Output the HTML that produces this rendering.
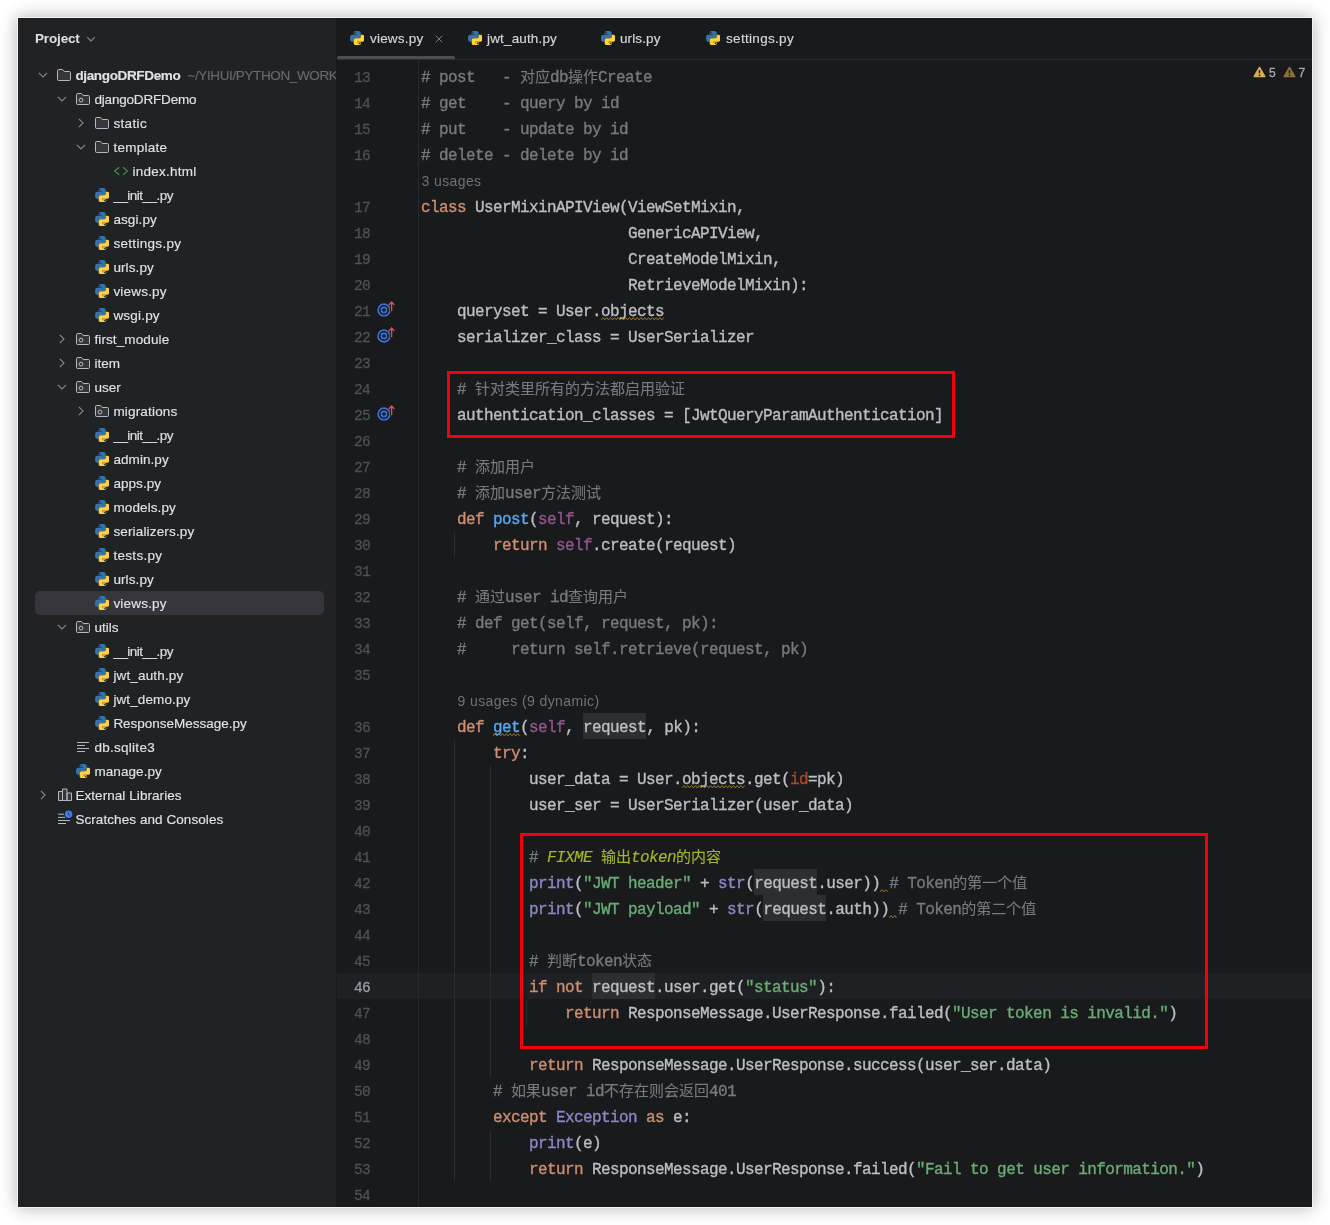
<!DOCTYPE html>
<html lang="zh"><head><meta charset="utf-8"><title>views.py</title>
<style>
*{box-sizing:border-box}
html,body{margin:0;padding:0}
body{width:1330px;height:1225px;overflow:hidden;background:#fff;position:relative;font-family:"Liberation Sans","Noto Sans CJK SC",sans-serif;}
.shadow{position:absolute;left:18px;top:18px;width:1294px;height:1189px;box-shadow:0 0 16px 1px rgba(0,0,0,.30);}
.win{position:absolute;left:17px;top:17px;width:1296px;height:1191px;background:#191a1c;border:1px solid rgba(255,255,255,.95);overflow:hidden}
.abs{position:absolute}
/* everything inside .page is positioned in page coordinates */
.page{position:absolute;left:-18px;top:-18px;width:1330px;height:1225px;will-change:transform}
.sidebar{position:absolute;left:18px;top:18px;width:318px;height:1189px;background:#212224;overflow:hidden}
.sb-edge{position:absolute;left:22px;top:18px;width:1px;height:1189px;background:#1b1c1e}
.ptitle{position:absolute;left:35px;top:30px;font-size:13.5px;font-weight:bold;color:#dfe1e5;line-height:18px;white-space:nowrap}
.row{position:absolute;left:18px;width:318px;overflow:hidden;height:24px;line-height:24px;font-size:13.5px;-webkit-text-stroke:0.15px;color:#dfe1e5;white-space:nowrap}
.row .lbl{position:absolute;top:0;white-space:nowrap}
.row svg{position:absolute}
.sel{position:absolute;left:35px;top:591px;width:289px;height:24px;border-radius:5px;background:#35353b}
.grey{color:#676a71}
.tabs{position:absolute;left:337px;top:18px;width:975px;height:41px;background:#191a1c}
.tabline{position:absolute;left:337px;top:59px;width:975px;height:1px;background:#2b2d30}
.tabsel{position:absolute;left:337px;top:56px;width:118px;height:3px;background:#4c4e54;border-radius:1.5px}
.tab{position:absolute;top:30px;font-size:13.5px;-webkit-text-stroke:0.15px;line-height:18px;color:#d5d7dc;white-space:nowrap}
.gutline{position:absolute;left:418px;top:60px;width:1px;height:1147px;background:#28292d}
.curline{position:absolute;left:337px;top:973px;width:975px;height:26px;background:#1f2024}
.ln{position:absolute;left:337px;width:33px;text-align:right;font-family:"Liberation Mono",monospace;font-size:14.5px;letter-spacing:-0.7px;height:26px;line-height:26px;color:#4d515a;-webkit-text-stroke:0.3px}
.ln.cur{color:#9b9ea7}
.cl{position:absolute;left:421px;height:26px;line-height:26px;font-family:"Liberation Mono","Noto Sans CJK SC",monospace;font-size:16px;letter-spacing:-0.6px;color:#bcbec4;white-space:pre;-webkit-text-stroke:0.35px}
.z{font-size:15px;letter-spacing:0;font-style:normal;-webkit-text-stroke:0.1px}
.hint{position:absolute;height:26px;line-height:26px;font-size:14px;color:#6e727a;white-space:nowrap}
.c{color:#767a81}.k{color:#cf8e6d}.f{color:#56a8f5}.s{color:#94558d}.b{color:#8888c6}.g{color:#6aab73}.a{color:#aa4926}
.t{color:#a2b72a;font-style:italic;-webkit-text-stroke:0.15px}.tz{color:#a2b72a}
.hl{background:#2c2e2f;padding:6px 0 2px}
.guide{position:absolute;width:1px;background:#2a2c2f}
.red{position:absolute;border:3px solid #f4000c}
.warn{position:absolute;font-size:12px;color:#a8abb2;line-height:14px;-webkit-text-stroke:0.3px}
</style></head>
<body>
<div class="shadow"></div>
<div class="win"><div class="page">
<div class="sidebar"></div><div class="sb-edge"></div>
<div class="sel"></div>
<div class="ptitle" style="letter-spacing:-0.154px">Project</div>
<svg class="abs" style="left:85px;top:33px" width="12" height="12" viewBox="0 0 12 12"><path d="M2.2 4.2 L6 7.9 L9.8 4.2" fill="none" stroke="#868a91" stroke-width="1.1"/></svg>
<svg class="abs" style="left:37px;top:69.4px" width="12" height="12" viewBox="0 0 12 12"><path d="M1.9 3.9 L6 8 L10.1 3.9" fill="none" stroke="#868a91" stroke-width="1.1"/></svg>
<svg class="abs" style="left:56px;top:67px" width="16" height="16" viewBox="0 0 16 16"><path d="M1.5 3.6 Q1.5 2.5 2.6 2.5 H6.2 Q6.8 2.5 7.2 3 L8.3 4.5 H13.4 Q14.5 4.5 14.5 5.6 V12.4 Q14.5 13.5 13.4 13.5 H2.6 Q1.5 13.5 1.5 12.4 Z" fill="#36363c" stroke="#b4b8bf" stroke-width="1"/></svg>
<div class="row" style="top:64px"><span class="lbl" style="left:57.4px;letter-spacing:-0.346px"><b>djangoDRFDemo</b></span><span class="lbl" style="left:162.4px"><span class="grey" style="margin-left:7px;letter-spacing:-0.377px">~/YIHUI/PYTHON_WORK</span></span></div>
<svg class="abs" style="left:56px;top:93.4px" width="12" height="12" viewBox="0 0 12 12"><path d="M1.9 3.9 L6 8 L10.1 3.9" fill="none" stroke="#868a91" stroke-width="1.1"/></svg>
<svg class="abs" style="left:75px;top:91px" width="16" height="16" viewBox="0 0 16 16"><path d="M1.5 3.6 Q1.5 2.5 2.6 2.5 H6.2 Q6.8 2.5 7.2 3 L8.3 4.5 H13.4 Q14.5 4.5 14.5 5.6 V12.4 Q14.5 13.5 13.4 13.5 H2.6 Q1.5 13.5 1.5 12.4 Z" fill="#36363c" stroke="#b4b8bf" stroke-width="1"/><circle cx="6" cy="9.1" r="1.9" fill="none" stroke="#b4b8bf" stroke-width="1"/></svg>
<div class="row" style="top:88px"><span class="lbl" style="left:76.4px;letter-spacing:-0.177px">djangoDRFDemo</span></div>
<svg class="abs" style="left:74.8px;top:117px" width="12" height="12" viewBox="0 0 12 12"><path d="M3.9 1.9 L8 6 L3.9 10.1" fill="none" stroke="#868a91" stroke-width="1.1"/></svg>
<svg class="abs" style="left:94px;top:115px" width="16" height="16" viewBox="0 0 16 16"><path d="M1.5 3.6 Q1.5 2.5 2.6 2.5 H6.2 Q6.8 2.5 7.2 3 L8.3 4.5 H13.4 Q14.5 4.5 14.5 5.6 V12.4 Q14.5 13.5 13.4 13.5 H2.6 Q1.5 13.5 1.5 12.4 Z" fill="#36363c" stroke="#b4b8bf" stroke-width="1"/></svg>
<div class="row" style="top:112px"><span class="lbl" style="left:95.4px;letter-spacing:0.347px">static</span></div>
<svg class="abs" style="left:75px;top:141.4px" width="12" height="12" viewBox="0 0 12 12"><path d="M1.9 3.9 L6 8 L10.1 3.9" fill="none" stroke="#868a91" stroke-width="1.1"/></svg>
<svg class="abs" style="left:94px;top:139px" width="16" height="16" viewBox="0 0 16 16"><path d="M1.5 3.6 Q1.5 2.5 2.6 2.5 H6.2 Q6.8 2.5 7.2 3 L8.3 4.5 H13.4 Q14.5 4.5 14.5 5.6 V12.4 Q14.5 13.5 13.4 13.5 H2.6 Q1.5 13.5 1.5 12.4 Z" fill="#36363c" stroke="#b4b8bf" stroke-width="1"/></svg>
<div class="row" style="top:136px"><span class="lbl" style="left:95.4px;letter-spacing:0.265px">template</span></div>
<svg class="abs" style="left:113.3px;top:165.2px" width="16" height="12" viewBox="0 0 16 12"><path d="M6.2 2.3 L1.7 6 L6.2 9.7 M10 2.3 L14.5 6 L10 9.7" fill="none" stroke="#468a4c" stroke-width="1.2"/></svg>
<div class="row" style="top:160px"><span class="lbl" style="left:114.4px;letter-spacing:0.247px">index.html</span></div>
<svg class="abs" style="left:95.1px;top:188.0px" width="14.4" height="14.4" viewBox="0 0 24 24"><path d="M11.9.1C9 .1 6.15.6 6.15 3V5.4H12.1V6.25H3.2C1.2 6.25.05 8.6.05 12C.05 15.6 1.1 17.9 3.2 17.9H6.1V14.8C6.1 13.1 7.2 11.9 8.8 11.9H14.7C16.5 11.9 17.85 10.6 17.85 8.5V3.2C17.85 1.1 15.5.1 11.9.1ZM8.36 1.85A1.06 1.06 0 1 0 8.37 1.85Z" fill="#3673a8" fill-rule="evenodd"/><path d="M11.9.1C9 .1 6.15.6 6.15 3V5.4H12.1V6.25H3.2C1.2 6.25.05 8.6.05 12C.05 15.6 1.1 17.9 3.2 17.9H6.1V14.8C6.1 13.1 7.2 11.9 8.8 11.9H14.7C16.5 11.9 17.85 10.6 17.85 8.5V3.2C17.85 1.1 15.5.1 11.9.1ZM8.36 1.85A1.06 1.06 0 1 0 8.37 1.85Z" fill="#ffd23a" fill-rule="evenodd" transform="rotate(180 12 12)"/></svg>
<div class="row" style="top:184px"><span class="lbl" style="left:95.4px;letter-spacing:-0.519px">__init__.py</span></div>
<svg class="abs" style="left:95.1px;top:212.0px" width="14.4" height="14.4" viewBox="0 0 24 24"><path d="M11.9.1C9 .1 6.15.6 6.15 3V5.4H12.1V6.25H3.2C1.2 6.25.05 8.6.05 12C.05 15.6 1.1 17.9 3.2 17.9H6.1V14.8C6.1 13.1 7.2 11.9 8.8 11.9H14.7C16.5 11.9 17.85 10.6 17.85 8.5V3.2C17.85 1.1 15.5.1 11.9.1ZM8.36 1.85A1.06 1.06 0 1 0 8.37 1.85Z" fill="#3673a8" fill-rule="evenodd"/><path d="M11.9.1C9 .1 6.15.6 6.15 3V5.4H12.1V6.25H3.2C1.2 6.25.05 8.6.05 12C.05 15.6 1.1 17.9 3.2 17.9H6.1V14.8C6.1 13.1 7.2 11.9 8.8 11.9H14.7C16.5 11.9 17.85 10.6 17.85 8.5V3.2C17.85 1.1 15.5.1 11.9.1ZM8.36 1.85A1.06 1.06 0 1 0 8.37 1.85Z" fill="#ffd23a" fill-rule="evenodd" transform="rotate(180 12 12)"/></svg>
<div class="row" style="top:208px"><span class="lbl" style="left:95.4px;letter-spacing:0.103px">asgi.py</span></div>
<svg class="abs" style="left:95.1px;top:236.0px" width="14.4" height="14.4" viewBox="0 0 24 24"><path d="M11.9.1C9 .1 6.15.6 6.15 3V5.4H12.1V6.25H3.2C1.2 6.25.05 8.6.05 12C.05 15.6 1.1 17.9 3.2 17.9H6.1V14.8C6.1 13.1 7.2 11.9 8.8 11.9H14.7C16.5 11.9 17.85 10.6 17.85 8.5V3.2C17.85 1.1 15.5.1 11.9.1ZM8.36 1.85A1.06 1.06 0 1 0 8.37 1.85Z" fill="#3673a8" fill-rule="evenodd"/><path d="M11.9.1C9 .1 6.15.6 6.15 3V5.4H12.1V6.25H3.2C1.2 6.25.05 8.6.05 12C.05 15.6 1.1 17.9 3.2 17.9H6.1V14.8C6.1 13.1 7.2 11.9 8.8 11.9H14.7C16.5 11.9 17.85 10.6 17.85 8.5V3.2C17.85 1.1 15.5.1 11.9.1ZM8.36 1.85A1.06 1.06 0 1 0 8.37 1.85Z" fill="#ffd23a" fill-rule="evenodd" transform="rotate(180 12 12)"/></svg>
<div class="row" style="top:232px"><span class="lbl" style="left:95.4px;letter-spacing:0.314px">settings.py</span></div>
<svg class="abs" style="left:95.1px;top:260.0px" width="14.4" height="14.4" viewBox="0 0 24 24"><path d="M11.9.1C9 .1 6.15.6 6.15 3V5.4H12.1V6.25H3.2C1.2 6.25.05 8.6.05 12C.05 15.6 1.1 17.9 3.2 17.9H6.1V14.8C6.1 13.1 7.2 11.9 8.8 11.9H14.7C16.5 11.9 17.85 10.6 17.85 8.5V3.2C17.85 1.1 15.5.1 11.9.1ZM8.36 1.85A1.06 1.06 0 1 0 8.37 1.85Z" fill="#3673a8" fill-rule="evenodd"/><path d="M11.9.1C9 .1 6.15.6 6.15 3V5.4H12.1V6.25H3.2C1.2 6.25.05 8.6.05 12C.05 15.6 1.1 17.9 3.2 17.9H6.1V14.8C6.1 13.1 7.2 11.9 8.8 11.9H14.7C16.5 11.9 17.85 10.6 17.85 8.5V3.2C17.85 1.1 15.5.1 11.9.1ZM8.36 1.85A1.06 1.06 0 1 0 8.37 1.85Z" fill="#ffd23a" fill-rule="evenodd" transform="rotate(180 12 12)"/></svg>
<div class="row" style="top:256px"><span class="lbl" style="left:95.4px;letter-spacing:0.105px">urls.py</span></div>
<svg class="abs" style="left:95.1px;top:284.0px" width="14.4" height="14.4" viewBox="0 0 24 24"><path d="M11.9.1C9 .1 6.15.6 6.15 3V5.4H12.1V6.25H3.2C1.2 6.25.05 8.6.05 12C.05 15.6 1.1 17.9 3.2 17.9H6.1V14.8C6.1 13.1 7.2 11.9 8.8 11.9H14.7C16.5 11.9 17.85 10.6 17.85 8.5V3.2C17.85 1.1 15.5.1 11.9.1ZM8.36 1.85A1.06 1.06 0 1 0 8.37 1.85Z" fill="#3673a8" fill-rule="evenodd"/><path d="M11.9.1C9 .1 6.15.6 6.15 3V5.4H12.1V6.25H3.2C1.2 6.25.05 8.6.05 12C.05 15.6 1.1 17.9 3.2 17.9H6.1V14.8C6.1 13.1 7.2 11.9 8.8 11.9H14.7C16.5 11.9 17.85 10.6 17.85 8.5V3.2C17.85 1.1 15.5.1 11.9.1ZM8.36 1.85A1.06 1.06 0 1 0 8.37 1.85Z" fill="#ffd23a" fill-rule="evenodd" transform="rotate(180 12 12)"/></svg>
<div class="row" style="top:280px"><span class="lbl" style="left:95.4px;letter-spacing:0.204px">views.py</span></div>
<svg class="abs" style="left:95.1px;top:308.0px" width="14.4" height="14.4" viewBox="0 0 24 24"><path d="M11.9.1C9 .1 6.15.6 6.15 3V5.4H12.1V6.25H3.2C1.2 6.25.05 8.6.05 12C.05 15.6 1.1 17.9 3.2 17.9H6.1V14.8C6.1 13.1 7.2 11.9 8.8 11.9H14.7C16.5 11.9 17.85 10.6 17.85 8.5V3.2C17.85 1.1 15.5.1 11.9.1ZM8.36 1.85A1.06 1.06 0 1 0 8.37 1.85Z" fill="#3673a8" fill-rule="evenodd"/><path d="M11.9.1C9 .1 6.15.6 6.15 3V5.4H12.1V6.25H3.2C1.2 6.25.05 8.6.05 12C.05 15.6 1.1 17.9 3.2 17.9H6.1V14.8C6.1 13.1 7.2 11.9 8.8 11.9H14.7C16.5 11.9 17.85 10.6 17.85 8.5V3.2C17.85 1.1 15.5.1 11.9.1ZM8.36 1.85A1.06 1.06 0 1 0 8.37 1.85Z" fill="#ffd23a" fill-rule="evenodd" transform="rotate(180 12 12)"/></svg>
<div class="row" style="top:304px"><span class="lbl" style="left:95.4px;letter-spacing:0.198px">wsgi.py</span></div>
<svg class="abs" style="left:55.8px;top:333px" width="12" height="12" viewBox="0 0 12 12"><path d="M3.9 1.9 L8 6 L3.9 10.1" fill="none" stroke="#868a91" stroke-width="1.1"/></svg>
<svg class="abs" style="left:75px;top:331px" width="16" height="16" viewBox="0 0 16 16"><path d="M1.5 3.6 Q1.5 2.5 2.6 2.5 H6.2 Q6.8 2.5 7.2 3 L8.3 4.5 H13.4 Q14.5 4.5 14.5 5.6 V12.4 Q14.5 13.5 13.4 13.5 H2.6 Q1.5 13.5 1.5 12.4 Z" fill="#36363c" stroke="#b4b8bf" stroke-width="1"/><circle cx="6" cy="9.1" r="1.9" fill="none" stroke="#b4b8bf" stroke-width="1"/></svg>
<div class="row" style="top:328px"><span class="lbl" style="left:76.4px;letter-spacing:0.121px">first_module</span></div>
<svg class="abs" style="left:55.8px;top:357px" width="12" height="12" viewBox="0 0 12 12"><path d="M3.9 1.9 L8 6 L3.9 10.1" fill="none" stroke="#868a91" stroke-width="1.1"/></svg>
<svg class="abs" style="left:75px;top:355px" width="16" height="16" viewBox="0 0 16 16"><path d="M1.5 3.6 Q1.5 2.5 2.6 2.5 H6.2 Q6.8 2.5 7.2 3 L8.3 4.5 H13.4 Q14.5 4.5 14.5 5.6 V12.4 Q14.5 13.5 13.4 13.5 H2.6 Q1.5 13.5 1.5 12.4 Z" fill="#36363c" stroke="#b4b8bf" stroke-width="1"/><circle cx="6" cy="9.1" r="1.9" fill="none" stroke="#b4b8bf" stroke-width="1"/></svg>
<div class="row" style="top:352px"><span class="lbl" style="left:76.4px;letter-spacing:0.071px">item</span></div>
<svg class="abs" style="left:56px;top:381.4px" width="12" height="12" viewBox="0 0 12 12"><path d="M1.9 3.9 L6 8 L10.1 3.9" fill="none" stroke="#868a91" stroke-width="1.1"/></svg>
<svg class="abs" style="left:75px;top:379px" width="16" height="16" viewBox="0 0 16 16"><path d="M1.5 3.6 Q1.5 2.5 2.6 2.5 H6.2 Q6.8 2.5 7.2 3 L8.3 4.5 H13.4 Q14.5 4.5 14.5 5.6 V12.4 Q14.5 13.5 13.4 13.5 H2.6 Q1.5 13.5 1.5 12.4 Z" fill="#36363c" stroke="#b4b8bf" stroke-width="1"/><circle cx="6" cy="9.1" r="1.9" fill="none" stroke="#b4b8bf" stroke-width="1"/></svg>
<div class="row" style="top:376px"><span class="lbl" style="left:76.4px;letter-spacing:0.009px">user</span></div>
<svg class="abs" style="left:74.8px;top:405px" width="12" height="12" viewBox="0 0 12 12"><path d="M3.9 1.9 L8 6 L3.9 10.1" fill="none" stroke="#868a91" stroke-width="1.1"/></svg>
<svg class="abs" style="left:94px;top:403px" width="16" height="16" viewBox="0 0 16 16"><path d="M1.5 3.6 Q1.5 2.5 2.6 2.5 H6.2 Q6.8 2.5 7.2 3 L8.3 4.5 H13.4 Q14.5 4.5 14.5 5.6 V12.4 Q14.5 13.5 13.4 13.5 H2.6 Q1.5 13.5 1.5 12.4 Z" fill="#36363c" stroke="#b4b8bf" stroke-width="1"/><circle cx="6" cy="9.1" r="1.9" fill="none" stroke="#b4b8bf" stroke-width="1"/></svg>
<div class="row" style="top:400px"><span class="lbl" style="left:95.4px;letter-spacing:0.182px">migrations</span></div>
<svg class="abs" style="left:95.1px;top:428.0px" width="14.4" height="14.4" viewBox="0 0 24 24"><path d="M11.9.1C9 .1 6.15.6 6.15 3V5.4H12.1V6.25H3.2C1.2 6.25.05 8.6.05 12C.05 15.6 1.1 17.9 3.2 17.9H6.1V14.8C6.1 13.1 7.2 11.9 8.8 11.9H14.7C16.5 11.9 17.85 10.6 17.85 8.5V3.2C17.85 1.1 15.5.1 11.9.1ZM8.36 1.85A1.06 1.06 0 1 0 8.37 1.85Z" fill="#3673a8" fill-rule="evenodd"/><path d="M11.9.1C9 .1 6.15.6 6.15 3V5.4H12.1V6.25H3.2C1.2 6.25.05 8.6.05 12C.05 15.6 1.1 17.9 3.2 17.9H6.1V14.8C6.1 13.1 7.2 11.9 8.8 11.9H14.7C16.5 11.9 17.85 10.6 17.85 8.5V3.2C17.85 1.1 15.5.1 11.9.1ZM8.36 1.85A1.06 1.06 0 1 0 8.37 1.85Z" fill="#ffd23a" fill-rule="evenodd" transform="rotate(180 12 12)"/></svg>
<div class="row" style="top:424px"><span class="lbl" style="left:95.4px;letter-spacing:-0.519px">__init__.py</span></div>
<svg class="abs" style="left:95.1px;top:452.0px" width="14.4" height="14.4" viewBox="0 0 24 24"><path d="M11.9.1C9 .1 6.15.6 6.15 3V5.4H12.1V6.25H3.2C1.2 6.25.05 8.6.05 12C.05 15.6 1.1 17.9 3.2 17.9H6.1V14.8C6.1 13.1 7.2 11.9 8.8 11.9H14.7C16.5 11.9 17.85 10.6 17.85 8.5V3.2C17.85 1.1 15.5.1 11.9.1ZM8.36 1.85A1.06 1.06 0 1 0 8.37 1.85Z" fill="#3673a8" fill-rule="evenodd"/><path d="M11.9.1C9 .1 6.15.6 6.15 3V5.4H12.1V6.25H3.2C1.2 6.25.05 8.6.05 12C.05 15.6 1.1 17.9 3.2 17.9H6.1V14.8C6.1 13.1 7.2 11.9 8.8 11.9H14.7C16.5 11.9 17.85 10.6 17.85 8.5V3.2C17.85 1.1 15.5.1 11.9.1ZM8.36 1.85A1.06 1.06 0 1 0 8.37 1.85Z" fill="#ffd23a" fill-rule="evenodd" transform="rotate(180 12 12)"/></svg>
<div class="row" style="top:448px"><span class="lbl" style="left:95.4px;letter-spacing:0.077px">admin.py</span></div>
<svg class="abs" style="left:95.1px;top:476.0px" width="14.4" height="14.4" viewBox="0 0 24 24"><path d="M11.9.1C9 .1 6.15.6 6.15 3V5.4H12.1V6.25H3.2C1.2 6.25.05 8.6.05 12C.05 15.6 1.1 17.9 3.2 17.9H6.1V14.8C6.1 13.1 7.2 11.9 8.8 11.9H14.7C16.5 11.9 17.85 10.6 17.85 8.5V3.2C17.85 1.1 15.5.1 11.9.1ZM8.36 1.85A1.06 1.06 0 1 0 8.37 1.85Z" fill="#3673a8" fill-rule="evenodd"/><path d="M11.9.1C9 .1 6.15.6 6.15 3V5.4H12.1V6.25H3.2C1.2 6.25.05 8.6.05 12C.05 15.6 1.1 17.9 3.2 17.9H6.1V14.8C6.1 13.1 7.2 11.9 8.8 11.9H14.7C16.5 11.9 17.85 10.6 17.85 8.5V3.2C17.85 1.1 15.5.1 11.9.1ZM8.36 1.85A1.06 1.06 0 1 0 8.37 1.85Z" fill="#ffd23a" fill-rule="evenodd" transform="rotate(180 12 12)"/></svg>
<div class="row" style="top:472px"><span class="lbl" style="left:95.4px;letter-spacing:0.058px">apps.py</span></div>
<svg class="abs" style="left:95.1px;top:500.0px" width="14.4" height="14.4" viewBox="0 0 24 24"><path d="M11.9.1C9 .1 6.15.6 6.15 3V5.4H12.1V6.25H3.2C1.2 6.25.05 8.6.05 12C.05 15.6 1.1 17.9 3.2 17.9H6.1V14.8C6.1 13.1 7.2 11.9 8.8 11.9H14.7C16.5 11.9 17.85 10.6 17.85 8.5V3.2C17.85 1.1 15.5.1 11.9.1ZM8.36 1.85A1.06 1.06 0 1 0 8.37 1.85Z" fill="#3673a8" fill-rule="evenodd"/><path d="M11.9.1C9 .1 6.15.6 6.15 3V5.4H12.1V6.25H3.2C1.2 6.25.05 8.6.05 12C.05 15.6 1.1 17.9 3.2 17.9H6.1V14.8C6.1 13.1 7.2 11.9 8.8 11.9H14.7C16.5 11.9 17.85 10.6 17.85 8.5V3.2C17.85 1.1 15.5.1 11.9.1ZM8.36 1.85A1.06 1.06 0 1 0 8.37 1.85Z" fill="#ffd23a" fill-rule="evenodd" transform="rotate(180 12 12)"/></svg>
<div class="row" style="top:496px"><span class="lbl" style="left:95.4px;letter-spacing:0.119px">models.py</span></div>
<svg class="abs" style="left:95.1px;top:524.0px" width="14.4" height="14.4" viewBox="0 0 24 24"><path d="M11.9.1C9 .1 6.15.6 6.15 3V5.4H12.1V6.25H3.2C1.2 6.25.05 8.6.05 12C.05 15.6 1.1 17.9 3.2 17.9H6.1V14.8C6.1 13.1 7.2 11.9 8.8 11.9H14.7C16.5 11.9 17.85 10.6 17.85 8.5V3.2C17.85 1.1 15.5.1 11.9.1ZM8.36 1.85A1.06 1.06 0 1 0 8.37 1.85Z" fill="#3673a8" fill-rule="evenodd"/><path d="M11.9.1C9 .1 6.15.6 6.15 3V5.4H12.1V6.25H3.2C1.2 6.25.05 8.6.05 12C.05 15.6 1.1 17.9 3.2 17.9H6.1V14.8C6.1 13.1 7.2 11.9 8.8 11.9H14.7C16.5 11.9 17.85 10.6 17.85 8.5V3.2C17.85 1.1 15.5.1 11.9.1ZM8.36 1.85A1.06 1.06 0 1 0 8.37 1.85Z" fill="#ffd23a" fill-rule="evenodd" transform="rotate(180 12 12)"/></svg>
<div class="row" style="top:520px"><span class="lbl" style="left:95.4px;letter-spacing:0.158px">serializers.py</span></div>
<svg class="abs" style="left:95.1px;top:548.0px" width="14.4" height="14.4" viewBox="0 0 24 24"><path d="M11.9.1C9 .1 6.15.6 6.15 3V5.4H12.1V6.25H3.2C1.2 6.25.05 8.6.05 12C.05 15.6 1.1 17.9 3.2 17.9H6.1V14.8C6.1 13.1 7.2 11.9 8.8 11.9H14.7C16.5 11.9 17.85 10.6 17.85 8.5V3.2C17.85 1.1 15.5.1 11.9.1ZM8.36 1.85A1.06 1.06 0 1 0 8.37 1.85Z" fill="#3673a8" fill-rule="evenodd"/><path d="M11.9.1C9 .1 6.15.6 6.15 3V5.4H12.1V6.25H3.2C1.2 6.25.05 8.6.05 12C.05 15.6 1.1 17.9 3.2 17.9H6.1V14.8C6.1 13.1 7.2 11.9 8.8 11.9H14.7C16.5 11.9 17.85 10.6 17.85 8.5V3.2C17.85 1.1 15.5.1 11.9.1ZM8.36 1.85A1.06 1.06 0 1 0 8.37 1.85Z" fill="#ffd23a" fill-rule="evenodd" transform="rotate(180 12 12)"/></svg>
<div class="row" style="top:544px"><span class="lbl" style="left:95.4px;letter-spacing:0.309px">tests.py</span></div>
<svg class="abs" style="left:95.1px;top:572.0px" width="14.4" height="14.4" viewBox="0 0 24 24"><path d="M11.9.1C9 .1 6.15.6 6.15 3V5.4H12.1V6.25H3.2C1.2 6.25.05 8.6.05 12C.05 15.6 1.1 17.9 3.2 17.9H6.1V14.8C6.1 13.1 7.2 11.9 8.8 11.9H14.7C16.5 11.9 17.85 10.6 17.85 8.5V3.2C17.85 1.1 15.5.1 11.9.1ZM8.36 1.85A1.06 1.06 0 1 0 8.37 1.85Z" fill="#3673a8" fill-rule="evenodd"/><path d="M11.9.1C9 .1 6.15.6 6.15 3V5.4H12.1V6.25H3.2C1.2 6.25.05 8.6.05 12C.05 15.6 1.1 17.9 3.2 17.9H6.1V14.8C6.1 13.1 7.2 11.9 8.8 11.9H14.7C16.5 11.9 17.85 10.6 17.85 8.5V3.2C17.85 1.1 15.5.1 11.9.1ZM8.36 1.85A1.06 1.06 0 1 0 8.37 1.85Z" fill="#ffd23a" fill-rule="evenodd" transform="rotate(180 12 12)"/></svg>
<div class="row" style="top:568px"><span class="lbl" style="left:95.4px;letter-spacing:0.105px">urls.py</span></div>
<svg class="abs" style="left:95.1px;top:596.0px" width="14.4" height="14.4" viewBox="0 0 24 24"><path d="M11.9.1C9 .1 6.15.6 6.15 3V5.4H12.1V6.25H3.2C1.2 6.25.05 8.6.05 12C.05 15.6 1.1 17.9 3.2 17.9H6.1V14.8C6.1 13.1 7.2 11.9 8.8 11.9H14.7C16.5 11.9 17.85 10.6 17.85 8.5V3.2C17.85 1.1 15.5.1 11.9.1ZM8.36 1.85A1.06 1.06 0 1 0 8.37 1.85Z" fill="#3673a8" fill-rule="evenodd"/><path d="M11.9.1C9 .1 6.15.6 6.15 3V5.4H12.1V6.25H3.2C1.2 6.25.05 8.6.05 12C.05 15.6 1.1 17.9 3.2 17.9H6.1V14.8C6.1 13.1 7.2 11.9 8.8 11.9H14.7C16.5 11.9 17.85 10.6 17.85 8.5V3.2C17.85 1.1 15.5.1 11.9.1ZM8.36 1.85A1.06 1.06 0 1 0 8.37 1.85Z" fill="#ffd23a" fill-rule="evenodd" transform="rotate(180 12 12)"/></svg>
<div class="row" style="top:592px"><span class="lbl" style="left:95.4px;letter-spacing:0.204px">views.py</span></div>
<svg class="abs" style="left:56px;top:621.4px" width="12" height="12" viewBox="0 0 12 12"><path d="M1.9 3.9 L6 8 L10.1 3.9" fill="none" stroke="#868a91" stroke-width="1.1"/></svg>
<svg class="abs" style="left:75px;top:619px" width="16" height="16" viewBox="0 0 16 16"><path d="M1.5 3.6 Q1.5 2.5 2.6 2.5 H6.2 Q6.8 2.5 7.2 3 L8.3 4.5 H13.4 Q14.5 4.5 14.5 5.6 V12.4 Q14.5 13.5 13.4 13.5 H2.6 Q1.5 13.5 1.5 12.4 Z" fill="#36363c" stroke="#b4b8bf" stroke-width="1"/><circle cx="6" cy="9.1" r="1.9" fill="none" stroke="#b4b8bf" stroke-width="1"/></svg>
<div class="row" style="top:616px"><span class="lbl" style="left:76.4px;letter-spacing:0.017px">utils</span></div>
<svg class="abs" style="left:95.1px;top:644.0px" width="14.4" height="14.4" viewBox="0 0 24 24"><path d="M11.9.1C9 .1 6.15.6 6.15 3V5.4H12.1V6.25H3.2C1.2 6.25.05 8.6.05 12C.05 15.6 1.1 17.9 3.2 17.9H6.1V14.8C6.1 13.1 7.2 11.9 8.8 11.9H14.7C16.5 11.9 17.85 10.6 17.85 8.5V3.2C17.85 1.1 15.5.1 11.9.1ZM8.36 1.85A1.06 1.06 0 1 0 8.37 1.85Z" fill="#3673a8" fill-rule="evenodd"/><path d="M11.9.1C9 .1 6.15.6 6.15 3V5.4H12.1V6.25H3.2C1.2 6.25.05 8.6.05 12C.05 15.6 1.1 17.9 3.2 17.9H6.1V14.8C6.1 13.1 7.2 11.9 8.8 11.9H14.7C16.5 11.9 17.85 10.6 17.85 8.5V3.2C17.85 1.1 15.5.1 11.9.1ZM8.36 1.85A1.06 1.06 0 1 0 8.37 1.85Z" fill="#ffd23a" fill-rule="evenodd" transform="rotate(180 12 12)"/></svg>
<div class="row" style="top:640px"><span class="lbl" style="left:95.4px;letter-spacing:-0.519px">__init__.py</span></div>
<svg class="abs" style="left:95.1px;top:668.0px" width="14.4" height="14.4" viewBox="0 0 24 24"><path d="M11.9.1C9 .1 6.15.6 6.15 3V5.4H12.1V6.25H3.2C1.2 6.25.05 8.6.05 12C.05 15.6 1.1 17.9 3.2 17.9H6.1V14.8C6.1 13.1 7.2 11.9 8.8 11.9H14.7C16.5 11.9 17.85 10.6 17.85 8.5V3.2C17.85 1.1 15.5.1 11.9.1ZM8.36 1.85A1.06 1.06 0 1 0 8.37 1.85Z" fill="#3673a8" fill-rule="evenodd"/><path d="M11.9.1C9 .1 6.15.6 6.15 3V5.4H12.1V6.25H3.2C1.2 6.25.05 8.6.05 12C.05 15.6 1.1 17.9 3.2 17.9H6.1V14.8C6.1 13.1 7.2 11.9 8.8 11.9H14.7C16.5 11.9 17.85 10.6 17.85 8.5V3.2C17.85 1.1 15.5.1 11.9.1ZM8.36 1.85A1.06 1.06 0 1 0 8.37 1.85Z" fill="#ffd23a" fill-rule="evenodd" transform="rotate(180 12 12)"/></svg>
<div class="row" style="top:664px"><span class="lbl" style="left:95.4px;letter-spacing:0.155px">jwt_auth.py</span></div>
<svg class="abs" style="left:95.1px;top:692.0px" width="14.4" height="14.4" viewBox="0 0 24 24"><path d="M11.9.1C9 .1 6.15.6 6.15 3V5.4H12.1V6.25H3.2C1.2 6.25.05 8.6.05 12C.05 15.6 1.1 17.9 3.2 17.9H6.1V14.8C6.1 13.1 7.2 11.9 8.8 11.9H14.7C16.5 11.9 17.85 10.6 17.85 8.5V3.2C17.85 1.1 15.5.1 11.9.1ZM8.36 1.85A1.06 1.06 0 1 0 8.37 1.85Z" fill="#3673a8" fill-rule="evenodd"/><path d="M11.9.1C9 .1 6.15.6 6.15 3V5.4H12.1V6.25H3.2C1.2 6.25.05 8.6.05 12C.05 15.6 1.1 17.9 3.2 17.9H6.1V14.8C6.1 13.1 7.2 11.9 8.8 11.9H14.7C16.5 11.9 17.85 10.6 17.85 8.5V3.2C17.85 1.1 15.5.1 11.9.1ZM8.36 1.85A1.06 1.06 0 1 0 8.37 1.85Z" fill="#ffd23a" fill-rule="evenodd" transform="rotate(180 12 12)"/></svg>
<div class="row" style="top:688px"><span class="lbl" style="left:95.4px;letter-spacing:0.109px">jwt_demo.py</span></div>
<svg class="abs" style="left:95.1px;top:716.0px" width="14.4" height="14.4" viewBox="0 0 24 24"><path d="M11.9.1C9 .1 6.15.6 6.15 3V5.4H12.1V6.25H3.2C1.2 6.25.05 8.6.05 12C.05 15.6 1.1 17.9 3.2 17.9H6.1V14.8C6.1 13.1 7.2 11.9 8.8 11.9H14.7C16.5 11.9 17.85 10.6 17.85 8.5V3.2C17.85 1.1 15.5.1 11.9.1ZM8.36 1.85A1.06 1.06 0 1 0 8.37 1.85Z" fill="#3673a8" fill-rule="evenodd"/><path d="M11.9.1C9 .1 6.15.6 6.15 3V5.4H12.1V6.25H3.2C1.2 6.25.05 8.6.05 12C.05 15.6 1.1 17.9 3.2 17.9H6.1V14.8C6.1 13.1 7.2 11.9 8.8 11.9H14.7C16.5 11.9 17.85 10.6 17.85 8.5V3.2C17.85 1.1 15.5.1 11.9.1ZM8.36 1.85A1.06 1.06 0 1 0 8.37 1.85Z" fill="#ffd23a" fill-rule="evenodd" transform="rotate(180 12 12)"/></svg>
<div class="row" style="top:712px"><span class="lbl" style="left:95.4px;letter-spacing:-0.015px">ResponseMessage.py</span></div>
<svg class="abs" style="left:76px;top:739px" width="16" height="16" viewBox="0 0 16 16"><path d="M1 3.5 H13 M1 6.5 H9 M1 9.5 H13 M1 12.5 H9" fill="none" stroke="#b4b8bf" stroke-width="1"/></svg>
<div class="row" style="top:736px"><span class="lbl" style="left:76.4px;letter-spacing:0.28px">db.sqlite3</span></div>
<svg class="abs" style="left:76.1px;top:764.0px" width="14.4" height="14.4" viewBox="0 0 24 24"><path d="M11.9.1C9 .1 6.15.6 6.15 3V5.4H12.1V6.25H3.2C1.2 6.25.05 8.6.05 12C.05 15.6 1.1 17.9 3.2 17.9H6.1V14.8C6.1 13.1 7.2 11.9 8.8 11.9H14.7C16.5 11.9 17.85 10.6 17.85 8.5V3.2C17.85 1.1 15.5.1 11.9.1ZM8.36 1.85A1.06 1.06 0 1 0 8.37 1.85Z" fill="#3673a8" fill-rule="evenodd"/><path d="M11.9.1C9 .1 6.15.6 6.15 3V5.4H12.1V6.25H3.2C1.2 6.25.05 8.6.05 12C.05 15.6 1.1 17.9 3.2 17.9H6.1V14.8C6.1 13.1 7.2 11.9 8.8 11.9H14.7C16.5 11.9 17.85 10.6 17.85 8.5V3.2C17.85 1.1 15.5.1 11.9.1ZM8.36 1.85A1.06 1.06 0 1 0 8.37 1.85Z" fill="#ffd23a" fill-rule="evenodd" transform="rotate(180 12 12)"/></svg>
<div class="row" style="top:760px"><span class="lbl" style="left:76.4px;letter-spacing:0.078px">manage.py</span></div>
<svg class="abs" style="left:36.8px;top:789px" width="12" height="12" viewBox="0 0 12 12"><path d="M3.9 1.9 L8 6 L3.9 10.1" fill="none" stroke="#868a91" stroke-width="1.1"/></svg>
<svg class="abs" style="left:57px;top:787px" width="16" height="16" viewBox="0 0 16 16"><path d="M1.5 4.5 H5.5 V13.5 H1.5 Z M5.5 2 H10 V13.5 H5.5 Z M10 6 H14.5 V13.5 H10 Z" fill="#36363c" stroke="#b4b8bf" stroke-width="1" stroke-linejoin="round"/></svg>
<div class="row" style="top:784px"><span class="lbl" style="left:57.4px;letter-spacing:0.064px">External Libraries</span></div>
<svg class="abs" style="left:57px;top:809px" width="18" height="20" viewBox="0 0 18 20"><path d="M1 5.2 H7 M1 8.4 H8 M1 11.5 H13 M1 14.5 H9" fill="none" stroke="#b4b8bf" stroke-width="1"/><circle cx="11.6" cy="5.3" r="3.7" fill="#3b78f2"/><path d="M11.6 3.4 V5.5 L12.8 6.6" fill="none" stroke="#1f2a55" stroke-width="0.8"/></svg>
<div class="row" style="top:808px"><span class="lbl" style="left:57.4px;letter-spacing:0.071px">Scratches and Consoles</span></div>
<div class="tabs"></div><div class="tabline"></div><div class="tabsel"></div>
<svg class="abs" style="left:350px;top:31.000000000000004px" width="14.4" height="14.4" viewBox="0 0 24 24"><path d="M11.9.1C9 .1 6.15.6 6.15 3V5.4H12.1V6.25H3.2C1.2 6.25.05 8.6.05 12C.05 15.6 1.1 17.9 3.2 17.9H6.1V14.8C6.1 13.1 7.2 11.9 8.8 11.9H14.7C16.5 11.9 17.85 10.6 17.85 8.5V3.2C17.85 1.1 15.5.1 11.9.1ZM8.36 1.85A1.06 1.06 0 1 0 8.37 1.85Z" fill="#3673a8" fill-rule="evenodd"/><path d="M11.9.1C9 .1 6.15.6 6.15 3V5.4H12.1V6.25H3.2C1.2 6.25.05 8.6.05 12C.05 15.6 1.1 17.9 3.2 17.9H6.1V14.8C6.1 13.1 7.2 11.9 8.8 11.9H14.7C16.5 11.9 17.85 10.6 17.85 8.5V3.2C17.85 1.1 15.5.1 11.9.1ZM8.36 1.85A1.06 1.06 0 1 0 8.37 1.85Z" fill="#ffd23a" fill-rule="evenodd" transform="rotate(180 12 12)"/></svg>
<div class="tab" style="left:370px;letter-spacing:0.204px">views.py</div>
<svg class="abs" style="left:467.6px;top:31.000000000000004px" width="14.4" height="14.4" viewBox="0 0 24 24"><path d="M11.9.1C9 .1 6.15.6 6.15 3V5.4H12.1V6.25H3.2C1.2 6.25.05 8.6.05 12C.05 15.6 1.1 17.9 3.2 17.9H6.1V14.8C6.1 13.1 7.2 11.9 8.8 11.9H14.7C16.5 11.9 17.85 10.6 17.85 8.5V3.2C17.85 1.1 15.5.1 11.9.1ZM8.36 1.85A1.06 1.06 0 1 0 8.37 1.85Z" fill="#3673a8" fill-rule="evenodd"/><path d="M11.9.1C9 .1 6.15.6 6.15 3V5.4H12.1V6.25H3.2C1.2 6.25.05 8.6.05 12C.05 15.6 1.1 17.9 3.2 17.9H6.1V14.8C6.1 13.1 7.2 11.9 8.8 11.9H14.7C16.5 11.9 17.85 10.6 17.85 8.5V3.2C17.85 1.1 15.5.1 11.9.1ZM8.36 1.85A1.06 1.06 0 1 0 8.37 1.85Z" fill="#ffd23a" fill-rule="evenodd" transform="rotate(180 12 12)"/></svg>
<div class="tab" style="left:487px;letter-spacing:0.155px">jwt_auth.py</div>
<svg class="abs" style="left:601px;top:31.000000000000004px" width="14.4" height="14.4" viewBox="0 0 24 24"><path d="M11.9.1C9 .1 6.15.6 6.15 3V5.4H12.1V6.25H3.2C1.2 6.25.05 8.6.05 12C.05 15.6 1.1 17.9 3.2 17.9H6.1V14.8C6.1 13.1 7.2 11.9 8.8 11.9H14.7C16.5 11.9 17.85 10.6 17.85 8.5V3.2C17.85 1.1 15.5.1 11.9.1ZM8.36 1.85A1.06 1.06 0 1 0 8.37 1.85Z" fill="#3673a8" fill-rule="evenodd"/><path d="M11.9.1C9 .1 6.15.6 6.15 3V5.4H12.1V6.25H3.2C1.2 6.25.05 8.6.05 12C.05 15.6 1.1 17.9 3.2 17.9H6.1V14.8C6.1 13.1 7.2 11.9 8.8 11.9H14.7C16.5 11.9 17.85 10.6 17.85 8.5V3.2C17.85 1.1 15.5.1 11.9.1ZM8.36 1.85A1.06 1.06 0 1 0 8.37 1.85Z" fill="#ffd23a" fill-rule="evenodd" transform="rotate(180 12 12)"/></svg>
<div class="tab" style="left:620px;letter-spacing:0.105px">urls.py</div>
<svg class="abs" style="left:706px;top:31.000000000000004px" width="14.4" height="14.4" viewBox="0 0 24 24"><path d="M11.9.1C9 .1 6.15.6 6.15 3V5.4H12.1V6.25H3.2C1.2 6.25.05 8.6.05 12C.05 15.6 1.1 17.9 3.2 17.9H6.1V14.8C6.1 13.1 7.2 11.9 8.8 11.9H14.7C16.5 11.9 17.85 10.6 17.85 8.5V3.2C17.85 1.1 15.5.1 11.9.1ZM8.36 1.85A1.06 1.06 0 1 0 8.37 1.85Z" fill="#3673a8" fill-rule="evenodd"/><path d="M11.9.1C9 .1 6.15.6 6.15 3V5.4H12.1V6.25H3.2C1.2 6.25.05 8.6.05 12C.05 15.6 1.1 17.9 3.2 17.9H6.1V14.8C6.1 13.1 7.2 11.9 8.8 11.9H14.7C16.5 11.9 17.85 10.6 17.85 8.5V3.2C17.85 1.1 15.5.1 11.9.1ZM8.36 1.85A1.06 1.06 0 1 0 8.37 1.85Z" fill="#ffd23a" fill-rule="evenodd" transform="rotate(180 12 12)"/></svg>
<div class="tab" style="left:726px;letter-spacing:0.314px">settings.py</div>
<svg class="abs" style="left:433px;top:32.5px" width="12" height="12" viewBox="0 0 12 12"><path d="M2.7 2.7 L9.3 9.3 M9.3 2.7 L2.7 9.3" fill="none" stroke="#7b7e85" stroke-width="1"/></svg>
<div class="curline"></div>
<div class="gutline"></div>
<svg class="abs" style="left:1253px;top:66px" width="13" height="12" viewBox="0 0 13 12"><path d="M6.5 1.6 L11.6 10.4 H1.4 Z" fill="#d6ae58" stroke="#d6ae58" stroke-width="1.8" stroke-linejoin="round"/><path d="M6.5 4 V7.4" stroke="#191a1c" stroke-width="1.4"/><circle cx="6.5" cy="9.3" r="0.85" fill="#191a1c"/></svg>
<div class="warn" style="left:1269px;top:66px">5</div>
<svg class="abs" style="left:1283px;top:66px" width="13" height="12" viewBox="0 0 13 12"><path d="M6.5 1.6 L11.6 10.4 H1.4 Z" fill="#8a713d" stroke="#8a713d" stroke-width="1.8" stroke-linejoin="round"/><path d="M6.5 4 V7.4" stroke="#191a1c" stroke-width="1.4"/><circle cx="6.5" cy="9.3" r="0.85" fill="#191a1c"/></svg>
<div class="warn" style="left:1298.6px;top:66px">7</div>
<div class="guide" style="left:454px;top:532px;height:26px"></div>
<div class="guide" style="left:454px;top:740px;height:442px"></div>
<div class="guide" style="left:490px;top:766px;height:312px"></div>
<div class="guide" style="left:490px;top:1130px;height:52px"></div>
<div class="guide" style="left:526px;top:1000px;height:26px"></div>
<div class="ln" style="top:65px">13</div>
<div class="cl" style="top:65px"><span class="c"># post   - <span class="z">对应</span>db<span class="z">操作</span>Create</span></div>
<div class="ln" style="top:91px">14</div>
<div class="cl" style="top:91px"><span class="c"># get    - query by id</span></div>
<div class="ln" style="top:117px">15</div>
<div class="cl" style="top:117px"><span class="c"># put    - update by id</span></div>
<div class="ln" style="top:143px">16</div>
<div class="cl" style="top:143px"><span class="c"># delete - delete by id</span></div>
<div class="hint" style="left:421.5px;top:168px;letter-spacing:0.4px">3 usages</div>
<div class="ln" style="top:195px">17</div>
<div class="cl" style="top:195px"><span class="k">class</span> UserMixinAPIView(ViewSetMixin,</div>
<div class="ln" style="top:221px">18</div>
<div class="cl" style="top:221px">                       GenericAPIView,</div>
<div class="ln" style="top:247px">19</div>
<div class="cl" style="top:247px">                       CreateModelMixin,</div>
<div class="ln" style="top:273px">20</div>
<div class="cl" style="top:273px">                       RetrieveModelMixin):</div>
<div class="ln" style="top:299px">21</div>
<div class="cl" style="top:299px">    queryset = User.<span class="wv">objects</span></div>
<div class="ln" style="top:325px">22</div>
<div class="cl" style="top:325px">    serializer_class = UserSerializer</div>
<div class="ln" style="top:351px">23</div>
<div class="ln" style="top:377px">24</div>
<div class="cl" style="top:377px"><span class="c">    # <span class="z">针对类里所有的方法都启用验证</span></span></div>
<div class="ln" style="top:403px">25</div>
<div class="cl" style="top:403px">    authentication_classes = [JwtQueryParamAuthentication]</div>
<div class="ln" style="top:429px">26</div>
<div class="ln" style="top:455px">27</div>
<div class="cl" style="top:455px"><span class="c">    # <span class="z">添加用户</span></span></div>
<div class="ln" style="top:481px">28</div>
<div class="cl" style="top:481px"><span class="c">    # <span class="z">添加</span>user<span class="z">方法测试</span></span></div>
<div class="ln" style="top:507px">29</div>
<div class="cl" style="top:507px">    <span class="k">def</span> <span class="f">post</span>(<span class="s">self</span>, request):</div>
<div class="ln" style="top:533px">30</div>
<div class="cl" style="top:533px">        <span class="k">return</span> <span class="s">self</span>.create(request)</div>
<div class="ln" style="top:559px">31</div>
<div class="ln" style="top:585px">32</div>
<div class="cl" style="top:585px"><span class="c">    # <span class="z">通过</span>user id<span class="z">查询用户</span></span></div>
<div class="ln" style="top:611px">33</div>
<div class="cl" style="top:611px"><span class="c">    # def get(self, request, pk):</span></div>
<div class="ln" style="top:637px">34</div>
<div class="cl" style="top:637px"><span class="c">    #     return self.retrieve(request, pk)</span></div>
<div class="ln" style="top:663px">35</div>
<div class="hint" style="left:457.5px;top:688px;letter-spacing:0.41px">9 usages (9 dynamic)</div>
<div class="ln" style="top:715px">36</div>
<div class="cl" style="top:715px">    <span class="k">def</span> <span class="f wv">get</span>(<span class="s">self</span>, <span class="hl">request</span>, pk):</div>
<div class="ln" style="top:741px">37</div>
<div class="cl" style="top:741px">        <span class="k">try</span>:</div>
<div class="ln" style="top:767px">38</div>
<div class="cl" style="top:767px">            user_data = User.<span class="wv">objects</span>.get(<span class="a">id</span>=pk)</div>
<div class="ln" style="top:793px">39</div>
<div class="cl" style="top:793px">            user_ser = UserSerializer(user_data)</div>
<div class="ln" style="top:819px">40</div>
<div class="ln" style="top:845px">41</div>
<div class="cl" style="top:845px"><span class="c">            # </span><span class="t">FIXME </span><span class="tz"><span class="z">输出</span></span><span class="t">token</span><span class="tz"><span class="z">的内容</span></span></div>
<div class="ln" style="top:871px">42</div>
<div class="cl" style="top:871px">            <span class="b">print</span>(<span class="g">"JWT header"</span> + <span class="b">str</span>(<span class="hl">request</span>.user))<span class="wv"> </span><span class="c"># Token<span class="z">的第一个值</span></span></div>
<div class="ln" style="top:897px">43</div>
<div class="cl" style="top:897px">            <span class="b">print</span>(<span class="g">"JWT payload"</span> + <span class="b">str</span>(<span class="hl">request</span>.auth))<span class="wv"> </span><span class="c"># Token<span class="z">的第二个值</span></span></div>
<div class="ln" style="top:923px">44</div>
<div class="ln" style="top:949px">45</div>
<div class="cl" style="top:949px"><span class="c">            # <span class="z">判断</span>token<span class="z">状态</span></span></div>
<div class="ln cur" style="top:975px">46</div>
<div class="cl" style="top:975px">            <span class="k">if not</span> <span class="hl">request</span>.user.get(<span class="g">"status"</span>):</div>
<div class="ln" style="top:1001px">47</div>
<div class="cl" style="top:1001px">                <span class="k">return</span> ResponseMessage.UserResponse.failed(<span class="g">"User token is invalid."</span>)</div>
<div class="ln" style="top:1027px">48</div>
<div class="ln" style="top:1053px">49</div>
<div class="cl" style="top:1053px">            <span class="k">return</span> ResponseMessage.UserResponse.success(user_ser.data)</div>
<div class="ln" style="top:1079px">50</div>
<div class="cl" style="top:1079px"><span class="c">        # <span class="z">如果</span>user id<span class="z">不存在则会返回</span>401</span></div>
<div class="ln" style="top:1105px">51</div>
<div class="cl" style="top:1105px">        <span class="k">except</span> <span class="b">Exception</span> <span class="k">as</span> e:</div>
<div class="ln" style="top:1131px">52</div>
<div class="cl" style="top:1131px">            <span class="b">print</span>(e)</div>
<div class="ln" style="top:1157px">53</div>
<div class="cl" style="top:1157px">            <span class="k">return</span> ResponseMessage.UserResponse.failed(<span class="g">"Fail to get user information."</span>)</div>
<div class="ln" style="top:1183px">54</div>
<svg class="abs" style="left:373.5px;top:297.5px" width="24" height="24" viewBox="0 0 24 24"><circle cx="10" cy="12" r="5.9" fill="none" stroke="#3d6fd6" stroke-width="1.7"/><circle cx="10" cy="12" r="2.6" fill="none" stroke="#3d6fd6" stroke-width="1.6"/><path d="M17.6 13.4 V3.8 M14.6 7 L17.6 4 L20.6 7" fill="none" stroke="#191a1c" stroke-width="3.4"/><path d="M17.6 13.2 V3.8 M14.8 6.9 L17.6 4 L20.4 6.9" fill="none" stroke="#cf5159" stroke-width="1.4"/></svg>
<svg class="abs" style="left:373.5px;top:323.5px" width="24" height="24" viewBox="0 0 24 24"><circle cx="10" cy="12" r="5.9" fill="none" stroke="#3d6fd6" stroke-width="1.7"/><circle cx="10" cy="12" r="2.6" fill="none" stroke="#3d6fd6" stroke-width="1.6"/><path d="M17.6 13.4 V3.8 M14.6 7 L17.6 4 L20.6 7" fill="none" stroke="#191a1c" stroke-width="3.4"/><path d="M17.6 13.2 V3.8 M14.8 6.9 L17.6 4 L20.4 6.9" fill="none" stroke="#cf5159" stroke-width="1.4"/></svg>
<svg class="abs" style="left:373.5px;top:401.5px" width="24" height="24" viewBox="0 0 24 24"><circle cx="10" cy="12" r="5.9" fill="none" stroke="#3d6fd6" stroke-width="1.7"/><circle cx="10" cy="12" r="2.6" fill="none" stroke="#3d6fd6" stroke-width="1.6"/><path d="M17.6 13.4 V3.8 M14.6 7 L17.6 4 L20.6 7" fill="none" stroke="#191a1c" stroke-width="3.4"/><path d="M17.6 13.2 V3.8 M14.8 6.9 L17.6 4 L20.4 6.9" fill="none" stroke="#cf5159" stroke-width="1.4"/></svg>
<svg class="abs" style="left:601px;top:316.5px" width="63" height="4" viewBox="0 0 63 4"><polyline points="0,2.9 1.9,0.6 3.8,2.9 5.7,0.6 7.6,2.9 9.5,0.6 11.4,2.9 13.3,0.6 15.2,2.9 17.1,0.6 19,2.9 20.9,0.6 22.8,2.9 24.7,0.6 26.6,2.9 28.5,0.6 30.4,2.9 32.3,0.6 34.2,2.9 36.1,0.6 38,2.9 39.9,0.6 41.8,2.9 43.7,0.6 45.6,2.9 47.5,0.6 49.4,2.9 51.3,0.6 53.2,2.9 55.1,0.6 57,2.9 58.9,0.6 60.8,2.9 62.7,0.6" fill="none" stroke="#a5842f" stroke-width="0.9"/></svg>
<svg class="abs" style="left:493px;top:732.5px" width="27" height="4" viewBox="0 0 27 4"><polyline points="0,2.9 1.9,0.6 3.8,2.9 5.7,0.6 7.6,2.9 9.5,0.6 11.4,2.9 13.3,0.6 15.2,2.9 17.1,0.6 19,2.9 20.9,0.6 22.8,2.9 24.7,0.6 26.6,2.9" fill="none" stroke="#a5842f" stroke-width="0.9"/></svg>
<svg class="abs" style="left:682px;top:784.5px" width="63" height="4" viewBox="0 0 63 4"><polyline points="0,2.9 1.9,0.6 3.8,2.9 5.7,0.6 7.6,2.9 9.5,0.6 11.4,2.9 13.3,0.6 15.2,2.9 17.1,0.6 19,2.9 20.9,0.6 22.8,2.9 24.7,0.6 26.6,2.9 28.5,0.6 30.4,2.9 32.3,0.6 34.2,2.9 36.1,0.6 38,2.9 39.9,0.6 41.8,2.9 43.7,0.6 45.6,2.9 47.5,0.6 49.4,2.9 51.3,0.6 53.2,2.9 55.1,0.6 57,2.9 58.9,0.6 60.8,2.9 62.7,0.6" fill="none" stroke="#a5842f" stroke-width="0.9"/></svg>
<svg class="abs" style="left:880px;top:888.5px" width="9" height="4" viewBox="0 0 9 4"><polyline points="0,2.9 1.9,0.6 3.8,2.9 5.7,0.6 7.6,2.9" fill="none" stroke="#a5842f" stroke-width="0.9"/></svg>
<svg class="abs" style="left:889px;top:914.5px" width="9" height="4" viewBox="0 0 9 4"><polyline points="0,2.9 1.9,0.6 3.8,2.9 5.7,0.6 7.6,2.9" fill="none" stroke="#a5842f" stroke-width="0.9"/></svg>
<div class="red" style="left:447px;top:371px;width:508px;height:67px"></div>
<div class="red" style="left:520px;top:833px;width:688px;height:216px;border-width:3.5px"></div>
</div></div>
</body></html>
